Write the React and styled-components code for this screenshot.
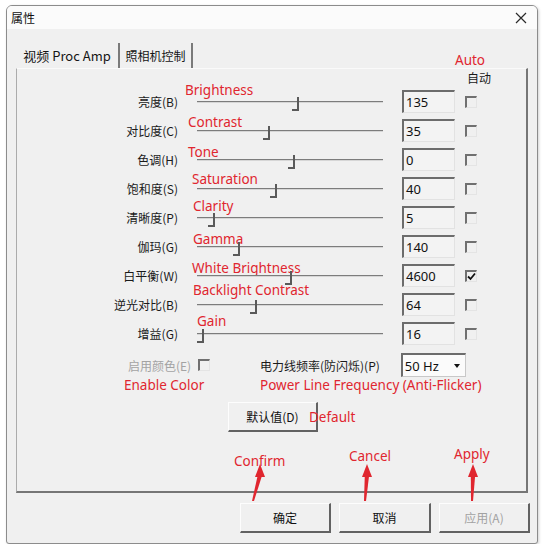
import React from 'react';
import styled, { createGlobalStyle } from 'styled-components';

const GlobalStyle = createGlobalStyle`
  html, body { margin: 0; padding: 0; background: #fff; }
  body {
    font-family: "Noto Sans CJK SC", "Noto Sans", sans-serif;
    font-size: 12px;
    color: #1a1a1a;
  }
`;

const RED = '#e0262f';

const SETTINGS = [
  { label: '亮度(B)', caption: 'Brightness', value: '135', pos: 0.538, dx: -5, dy: -12 },
  { label: '对比度(C)', caption: 'Contrast', value: '35', pos: 0.382, dx: -2, dy: -9 },
  { label: '色调(H)', caption: 'Tone', value: '0', pos: 0.516, dx: -2, dy: -8 },
  { label: '饱和度(S)', caption: 'Saturation', value: '40', pos: 0.419, dx: 2, dy: -10 },
  { label: '清晰度(P)', caption: 'Clarity', value: '5', pos: 0.086, dx: 3, dy: -12 },
  { label: '伽玛(G)', caption: 'Gamma', value: '140', pos: 0.22, dx: 3, dy: -8 },
  { label: '白平衡(W)', caption: 'White Brightness', value: '4600', pos: 0.5, dx: 2, dy: -8, auto: true },
  { label: '逆光对比(B)', caption: 'Backlight Contrast', value: '64', pos: 0.312, dx: 3, dy: -15 },
  { label: '增益(G)', caption: 'Gain', value: '16', pos: 0.027, dx: 7, dy: -13 },
];

const Window = styled.div`
  margin: 5px 0 0 6px;
  width: 532px;
  height: 539px;
  box-sizing: border-box;
  border: 1px solid #8c8c8c;
  border-radius: 6px 6px 3px 3px;
  display: flex;
  flex-direction: column;
  overflow: hidden;
  background: #f0f0f0;
  box-shadow: 1px 1px 3px rgba(0, 0, 0, 0.18);
`;

const TitleBar = styled.div`
  flex: none;
  height: 23px;
  background: #fbfbfb;
  display: flex;
  align-items: center;
  justify-content: space-between;
  padding: 0 10px 0 4px;
`;

const Title = styled.span`
  font-size: 12px;
  color: #111;
`;

const CloseButton = styled.span`
  display: flex;
  width: 12px;
  height: 12px;
`;

const Body = styled.div`
  flex: 1;
  padding: 14px 9px 10px;
  display: flex;
  flex-direction: column;
`;

const TabStrip = styled.div`
  display: flex;
  height: 25px;
`;

const Tab = styled.div`
  width: ${p => p.$width}px;
  box-sizing: border-box;
  border-right: 2px solid #7a7a7a;
  display: flex;
  align-items: center;
  justify-content: center;
  font-size: ${p => (p.$active ? 13 : 12)}px;
  color: #151515;
`;

const Panel = styled.div`
  position: relative;
  height: 425px;
  box-sizing: border-box;
  border-top: 1px solid #fafafa;
  border-left: 1px solid #ababab;
  border-right: 2px solid #767676;
  border-bottom: 2px solid #767676;
`;

const SliderGrid = styled.div`
  display: grid;
  grid-template-columns: 161px 200px 53px 28px;
  grid-template-rows: 18px repeat(9, 29px);
  column-gap: 12px;
  align-items: center;
`;

const AutoHeader = styled.div`
  position: relative;
  grid-column: 1 / -1;
  justify-self: end;
  width: 28px;
  font-size: 12px;
  line-height: 18px;
`;

const Annotation = styled.span`
  position: absolute;
  left: ${p => p.$x}px;
  top: ${p => p.$y}px;
  font-family: "Noto Sans", sans-serif;
  font-size: 13.5px;
  line-height: 16px;
  color: ${RED};
  white-space: nowrap;
  pointer-events: none;
`;

const Label = styled.div`
  grid-column: 1;
  text-align: right;
  white-space: nowrap;
`;

const SliderCell = styled.div`
  position: relative;
  grid-column: 2;
  height: 29px;
  display: flex;
  align-items: center;
  padding: 0 7px;
`;

const Track = styled.div`
  position: relative;
  flex: 1;
  height: 0;
  border-top: 1px solid #7c7c7c;
  border-bottom: 1px solid #d6d6d6;
`;

const Thumb = styled.span`
  position: absolute;
  top: -5px;
  width: 5px;
  height: 12px;
  border-right: 2px solid #5a5a5a;
  border-bottom: 2px solid #5a5a5a;
`;

const ValueBox = styled.div`
  grid-column: 3;
  height: 23px;
  box-sizing: border-box;
  border-left: 2px solid #6c6c6c;
  border-top: 2px solid #6c6c6c;
  border-right: 1px solid #e2e2e2;
  border-bottom: 1px solid #e2e2e2;
  background: #f3f3f3;
  padding-left: 2px;
  font-family: "Noto Sans", sans-serif;
  font-size: 13px;
  line-height: 20px;
  color: #111;
`;

const CheckCell = styled.div`
  grid-column: 4;
  display: flex;
  margin-left: -2px;
`;

const Checkbox = styled.span`
  display: inline-flex;
  width: 12px;
  height: 12px;
  box-sizing: border-box;
  border-left: 2px solid #707070;
  border-top: 2px solid #707070;
  border-right: 1px solid #e4e4e4;
  border-bottom: 1px solid #e4e4e4;
  align-items: center;
  justify-content: center;
`;

const OptionsRow = styled.div`
  display: flex;
  margin-top: 5px;
  padding-left: 107px;
`;

const OptionGroup = styled.div`
  display: flex;
  flex-direction: column;
  width: ${p => (p.$width ? `${p.$width}px` : 'auto')};
`;

const InlineRow = styled.div`
  display: flex;
  align-items: center;
  height: 24px;
  gap: ${p => p.$gap}px;
  padding-left: ${p => p.$indent || 0}px;
`;

const Caption = styled.div`
  font-family: "Noto Sans", sans-serif;
  font-size: 13.5px;
  line-height: 16px;
  color: ${RED};
  white-space: nowrap;
`;

const Dim = styled.span`
  color: #a3a3a3;
`;

const Combo = styled.div`
  width: 65px;
  height: 24px;
  box-sizing: border-box;
  border-left: 2px solid #6c6c6c;
  border-top: 2px solid #6c6c6c;
  border-right: 1px solid #c8c8c8;
  border-bottom: 1px solid #c8c8c8;
  background: #fbfbfb;
  display: flex;
  align-items: center;
  justify-content: space-between;
  padding: 0 5px 0 2px;
  font-family: "Noto Sans", sans-serif;
  font-size: 13px;
  color: #111;
`;

const ComboArrow = styled.span`
  width: 0;
  height: 0;
  border-left: 3.5px solid transparent;
  border-right: 3.5px solid transparent;
  border-top: 4px solid #111;
`;

const PushButton = styled.button`
  position: relative;
  width: ${p => p.$width}px;
  height: 30px;
  padding: 0;
  box-sizing: border-box;
  background: #f0f0f0;
  border-style: solid;
  border-width: 1px 2px 2px 1px;
  border-color: #fdfdfd #626262 #626262 #fdfdfd;
  font-family: "Noto Sans CJK SC", "Noto Sans", sans-serif;
  font-size: 12px;
  color: ${p => (p.disabled ? '#a2a2a2' : '#111')};
  overflow: visible;
`;

const DefaultButton = styled(PushButton)`
  margin: 9px 0 0 211px;
`;

const ButtonRow = styled.div`
  display: flex;
  justify-content: flex-end;
  gap: 8px;
  margin: 10px -2px 0 0;
`;

const ArrowLayer = styled.svg`
  position: absolute;
  left: 0;
  top: -42px;
  overflow: visible;
  pointer-events: none;
`;

const RedArrow = ({ tip, tail }) => (
  <ArrowLayer width="40" height="40">
    <polygon fill={RED} points={`${tip},${2} ${tip + 5},15 ${tip - 5},15`} />
    <polygon fill={RED} points={`${tip - 2.2},13 ${tip + 2.2},13 ${tail + 1},${39} ${tail - 1},${39}`} />
  </ArrowLayer>
);

const CheckMark = () => (
  <svg width="9" height="9" viewBox="0 0 9 9">
    <polyline points="1,4.5 3.5,7 8,1.5" fill="none" stroke="#111" strokeWidth="1.8" />
  </svg>
);

const SettingRow = ({ item }) => (
  <>
    <Label>{item.label}</Label>
    <SliderCell>
      <Annotation $x={item.dx} $y={14.5 + item.dy - 8}>{item.caption}</Annotation>
      <Track>
        <Thumb style={{ left: `calc(${item.pos * 100}% - 5px)` }} />
      </Track>
    </SliderCell>
    <ValueBox>{item.value}</ValueBox>
    <CheckCell>
      <Checkbox>{item.auto && <CheckMark />}</Checkbox>
    </CheckCell>
  </>
);

const App = () => {
  return (
    <>
      <GlobalStyle />
      <Window>
        <TitleBar>
          <Title>属性</Title>
          <CloseButton>
            <svg width="12" height="12" viewBox="0 0 12 12">
              <path d="M1 1 L11 11 M11 1 L1 11" stroke="#2a2a2a" strokeWidth="1.2" />
            </svg>
          </CloseButton>
        </TitleBar>
        <Body>
          <TabStrip>
            <Tab $width={104} $active>视频 Proc Amp</Tab>
            <Tab $width={73}>照相机控制</Tab>
          </TabStrip>
          <Panel>
            <SliderGrid>
              <AutoHeader>
                <Annotation $x={-12} $y={-17}>Auto</Annotation>
                自动
              </AutoHeader>
              {SETTINGS.map((item, index) => (
                <SettingRow item={item} key={index} />
              ))}
            </SliderGrid>
            <OptionsRow>
              <OptionGroup $width={136}>
                <InlineRow $gap={7} $indent={4}>
                  <Dim>启用颜色(E)</Dim>
                  <Checkbox />
                </InlineRow>
                <Caption>Enable Color</Caption>
              </OptionGroup>
              <OptionGroup>
                <InlineRow $gap={21}>
                  <span>电力线频率(防闪烁)(P)</span>
                  <Combo>
                    50 Hz
                    <ComboArrow />
                  </Combo>
                </InlineRow>
                <Caption>Power Line Frequency (Anti-Flicker)</Caption>
              </OptionGroup>
            </OptionsRow>
            <DefaultButton $width={90}>
              默认值(D)
              <Annotation $x={80} $y={6}>Default</Annotation>
            </DefaultButton>
          </Panel>
          <ButtonRow>
            <PushButton $width={91}>
              确定
              <Annotation $x={-7} $y={-51}>Confirm</Annotation>
              <RedArrow tip={19} tail={12} />
            </PushButton>
            <PushButton $width={92}>
              取消
              <Annotation $x={9} $y={-56}>Cancel</Annotation>
              <RedArrow tip={27} tail={25} />
            </PushButton>
            <PushButton $width={91} disabled>
              应用(A)
              <Annotation $x={14} $y={-58}>Apply</Annotation>
              <RedArrow tip={33} tail={32} />
            </PushButton>
          </ButtonRow>
        </Body>
      </Window>
    </>
  );
};

export default App;
